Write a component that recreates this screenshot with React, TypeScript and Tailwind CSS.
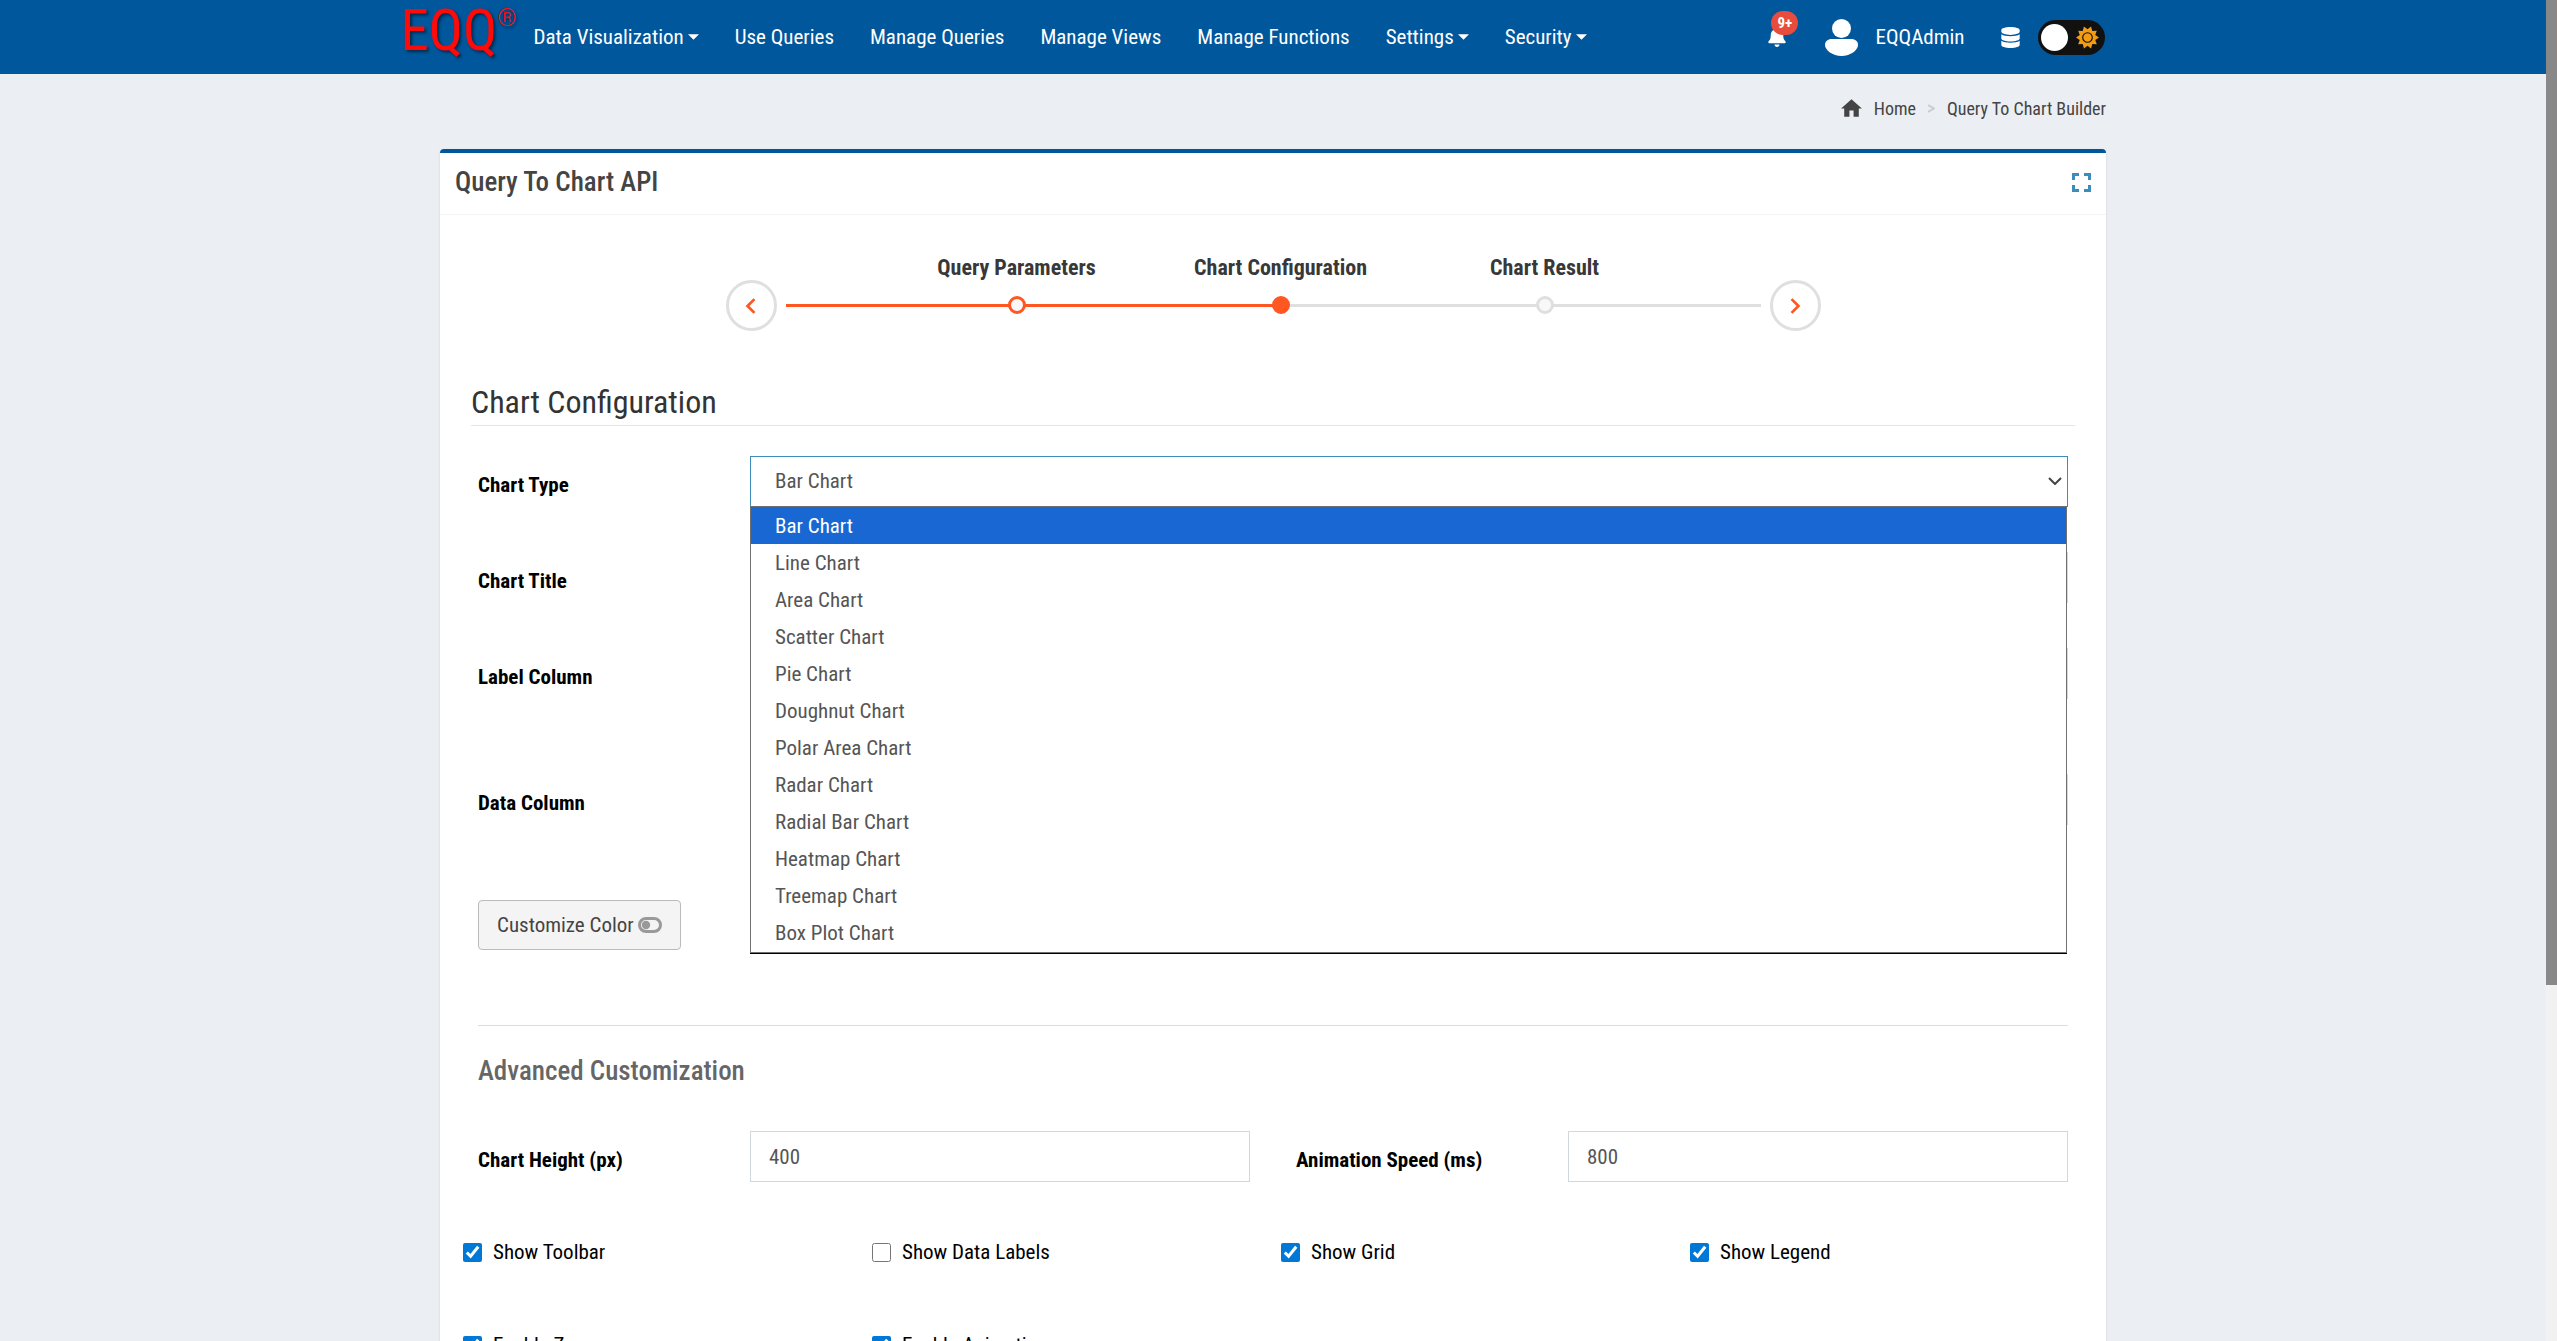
import { useState } from "react";
import type { ReactNode } from "react";
import { FaBell, FaDatabase } from "react-icons/fa";
import { MdHome } from "react-icons/md";

const chartTypes = [
  "Bar Chart",
  "Line Chart",
  "Area Chart",
  "Scatter Chart",
  "Pie Chart",
  "Doughnut Chart",
  "Polar Area Chart",
  "Radar Chart",
  "Radial Bar Chart",
  "Heatmap Chart",
  "Treemap Chart",
  "Box Plot Chart",
];

const navItems = [
  { label: "Data Visualization", menu: true },
  { label: "Use Queries" },
  { label: "Manage Queries" },
  { label: "Manage Views" },
  { label: "Manage Functions" },
  { label: "Settings", menu: true },
  { label: "Security", menu: true },
];

const toggles = [
  { id: "toolbar", label: "Show Toolbar", checked: true },
  { id: "data-labels", label: "Show Data Labels", checked: false },
  { id: "grid", label: "Show Grid", checked: true },
  { id: "legend", label: "Show Legend", checked: true },
  { id: "zoom", label: "Enable Zoom", checked: true },
  { id: "animation", label: "Enable Animation", checked: true },
];

const steps = [
  { label: "Query Parameters", state: "done" },
  { label: "Chart Configuration", state: "current" },
  { label: "Chart Result", state: "todo" },
];

function dotClass(state: string): string {
  switch (state) {
    case "done":
      return "border-[#ff5722] bg-[#f8f8f8]";
    case "current":
      return "border-[#ff5722] bg-[#ff5722]";
    default:
      return "border-[#dfdfdf] bg-[#f8f8f8]";
  }
}

function Caret() {
  return (
    <svg viewBox="0 0 10 5" className="h-[6px] w-[11px] fill-current" aria-hidden="true">
      <path d="M0 0h10L5 5z" />
    </svg>
  );
}

// ten rays, alternating outer and inner radius
const sunRays = Array.from({ length: 20 }, (_, i) => {
  const angle = (i * Math.PI) / 10;
  const r = i % 2 === 0 ? 12 : 8.5;
  return `${12 + r * Math.cos(angle)},${12 + r * Math.sin(angle)}`;
}).join(" ");

function SunIcon() {
  return (
    <svg viewBox="0 0 24 24" className="size-[23px]" aria-hidden="true">
      <polygon points={sunRays} fill="#f39c12" />
      <circle cx="12" cy="12" r="5" fill="#f39c12" stroke="#111" strokeWidth="1.2" />
    </svg>
  );
}

function UserIcon() {
  return (
    <svg viewBox="0 0 33 37" className="h-[37px] w-[33px] fill-current" aria-hidden="true">
      <circle cx="16.5" cy="9.5" r="9.5" />
      <path d="M7 20h19c4.500 0 7 2.500 7 6 0 5-7.500 11-16.500 11S0 31 0 26c0-3.500 2.500-6 7-6z" />
    </svg>
  );
}

function ToggleOffIcon() {
  return (
    <svg viewBox="0 0 24 16" className="h-[16px] w-[24px]" aria-hidden="true">
      <rect x="1.5" y="1.5" width="21" height="13" rx="6.5" fill="none" stroke="#999" strokeWidth="3" />
      <circle cx="8" cy="8" r="4.2" fill="#999" />
    </svg>
  );
}

function Header() {
  return (
    <header className="bg-[#00579c] text-white">
      <div className="mx-auto flex h-[74px] max-w-[1745px] items-center pr-[41px]">
        <a href="#" className="flex h-full w-[133px] items-start text-[#ff0a0a] [text-shadow:2px_2px_3px_#00000080]">
          <span className="text-[57px] leading-[62px]">EQQ</span>
          <span className="pt-1 text-[24px] leading-[28px] font-light">®</span>
        </a>
        <nav className="flex items-center gap-9 text-[21px] leading-[32px]">
          {navItems.map((item) => (
            <a key={item.label} href="#" className="flex items-center gap-1 whitespace-nowrap">
              {item.label}
              {item.menu && <Caret />}
            </a>
          ))}
        </nav>
        <div className="ml-auto flex items-center">
          <button type="button" aria-label="Notifications" className="relative mr-[38px]">
            <FaBell className="size-[20px]" />
            <span className="absolute -top-[16px] left-[4px] rounded-full bg-[#e74c3c] px-[6px] text-[15px] leading-[24px] font-bold">
              9+
            </span>
          </button>
          <a href="#" className="mr-[35px] flex items-center gap-[17px] text-[21px] leading-[32px]">
            <UserIcon />
            EQQAdmin
          </a>
          <button type="button" aria-label="Data source" className="mr-[17px]">
            <FaDatabase className="size-[21px]" />
          </button>
          <button
            type="button"
            role="switch"
            aria-checked="false"
            aria-label="Dark mode"
            className="flex h-[35px] w-[67px] items-center justify-between rounded-full bg-[#111] pr-[6px] pl-[3px]"
          >
            <span className="size-[27px] rounded-full bg-white" />
            <SunIcon />
          </button>
        </div>
      </div>
    </header>
  );
}

function Stepper() {
  return (
    <div className="mx-auto flex w-[1095px] items-end pt-[39px]">
      <StepButton label="Previous step" path="M10.500 3l-5 5 5 5" />
      <div className="relative mx-[9px] h-[77px] grow">
        <div className="absolute bottom-[24px] left-0 flex h-[3px] w-full bg-[#dfdfdf]">
          <div className="w-[51%] bg-[#ff5722]" />
        </div>
        <ol className="relative ml-[99px] grid w-[792px] grid-cols-3">
          {steps.map((step) => (
            <li key={step.label} className="flex flex-col items-center gap-[14px]">
              <span className="text-[22px] leading-[28px] font-bold text-[#383838]">{step.label}</span>
              <span className={`size-[18px] rounded-full border-3 ${dotClass(step.state)}`} />
            </li>
          ))}
        </ol>
      </div>
      <StepButton label="Next step" path="M5.500 3l5 5-5 5" />
    </div>
  );
}

function StepButton({ label, path }: { label: string; path: string }) {
  return (
    <button
      type="button"
      aria-label={label}
      className="flex size-[51px] shrink-0 items-center justify-center rounded-full border-3 border-[#dfdfdf]"
    >
      <svg viewBox="0 0 16 16" className="size-[22px] fill-none stroke-[#ff5722] stroke-2" aria-hidden="true">
        <path d={path} />
      </svg>
    </button>
  );
}

function Field({ id, label, children }: { id: string; label: string; children: ReactNode }) {
  return (
    <div className="grid grid-cols-[272px_1fr]">
      <label htmlFor={id} className="pt-[15px] text-[21px] leading-[28px] font-bold text-black">
        {label}
      </label>
      {children}
    </div>
  );
}

const inputClass = "h-[51px] w-full border border-[#d2d6de] bg-white px-[18px] text-[21px] text-[#555]";

function ChartTypeField() {
  const [value, setValue] = useState(chartTypes[0]);

  return (
    <Field id="chart-type" label="Chart Type">
      <div className="relative">
        <select
          id="chart-type"
          value={value}
          onChange={(e) => setValue(e.target.value)}
          className="h-[51px] w-full appearance-none border border-[#3c8dbc] bg-white px-6 pt-px text-[21px] text-[#555] outline-none"
        >
          {chartTypes.map((type) => (
            <option key={type}>{type}</option>
          ))}
        </select>
        <svg
          viewBox="0 0 14 8"
          className="pointer-events-none absolute top-[21px] right-[6px] h-[8px] w-[14px] fill-none stroke-[#444] stroke-2"
          aria-hidden="true"
        >
          <path d="M1 1l6 6 6-6" />
        </svg>
        <ul
          role="listbox"
          aria-label="Chart Type"
          className="absolute top-[50px] right-px left-0 z-10 border border-[#707070] bg-white pb-px text-[21px] leading-[35px] text-[#555] shadow-[0_1px_0_#000]"
        >
          {chartTypes.map((type) => (
            <li
              key={type}
              role="option"
              aria-selected={type === value}
              onClick={() => setValue(type)}
              className={`px-6 pt-[2px] ${type === value ? "bg-[#1967d2] text-white" : ""}`}
            >
              {type}
            </li>
          ))}
        </ul>
      </div>
    </Field>
  );
}

export default function App() {
  return (
    <div className="flex h-screen overflow-hidden bg-[#ebeff4] font-['Roboto_Condensed',Roboto,sans-serif] text-[#444]">
      <div className="grow overflow-hidden">
        <Header />

        <main className="mx-auto max-w-[1666px]">
          <nav aria-label="Breadcrumb" className="flex h-[75px] items-center justify-end pb-[6px] text-[18px]">
            <MdHome className="mr-[10px] size-[25px]" />
            <a href="#">Home</a>
            <svg viewBox="0 0 7 9" className="mx-[12px] h-[9px] w-[7px] fill-none stroke-[#ccc] stroke-2" aria-hidden="true">
              <path d="M0 1l6 3.500L0 8" />
            </svg>
            <span>Query To Chart Builder</span>
          </nav>

          <section className="rounded-t-[4px] border-t-4 border-[#00579c] bg-white pb-10 shadow-sm">
            <div className="flex h-[62px] items-center justify-between border-b border-[#f4f4f4] px-[15px] pb-[3px]">
              <h1 className="text-[27px] leading-[36px] font-medium">Query To Chart API</h1>
              <button type="button" aria-label="Full screen">
                <svg viewBox="0 0 19 19" className="size-[19px] fill-none stroke-[#3c8dbc] stroke-3" aria-hidden="true">
                  <path d="M1.500 7V1.500H7M12 1.500h5.500V7M17.500 12v5.500H12M7 17.500H1.500V12" />
                </svg>
              </button>
            </div>

            <Stepper />

            <h2 className="mx-[31px] mt-[48px] border-b border-[#e5e5e5] text-[32px] leading-[46px] text-[#333]">
              Chart Configuration
            </h2>

            <form className="mx-[38px] mt-[30px]">
              <div className="flex flex-col gap-[45px]">
                <ChartTypeField />
                <Field id="chart-title" label="Chart Title">
                  <input id="chart-title" type="text" className={inputClass} />
                </Field>
                <Field id="label-column" label="Label Column">
                  <select id="label-column" className={inputClass} />
                </Field>
              </div>
              <div className="mt-[75px]">
                <Field id="data-column" label="Data Column">
                  <select id="data-column" className={inputClass} />
                </Field>
              </div>

              <button
                type="button"
                className="mt-[75px] flex h-[50px] items-center gap-[4px] rounded-[4px] border border-[#bbb] bg-[#f4f4f4] px-[18px] text-[21px] leading-[32px]"
              >
                Customize Color
                <ToggleOffIcon />
              </button>

              <h3 className="mt-[75px] border-t border-[#ddd] pt-[27px] text-[27px] leading-[36px] font-medium text-[#666]">
                Advanced Customization
              </h3>
              <div className="mt-[42px] grid grid-cols-2 gap-[46px]">
                <Field id="chart-height" label="Chart Height (px)">
                  <input id="chart-height" type="text" defaultValue="400" className={inputClass} />
                </Field>
                <Field id="animation-speed" label="Animation Speed (ms)">
                  <input id="animation-speed" type="text" defaultValue="800" className={inputClass} />
                </Field>
              </div>

              <div className="-mr-[31px] -ml-[15px] mt-[54px] grid grid-cols-4 gap-y-[61px] text-[21px] leading-[32px] text-black">
                {toggles.map((t) => (
                  <label key={t.id} htmlFor={t.id} className="flex items-center gap-[11px]">
                    <input id={t.id} type="checkbox" defaultChecked={t.checked} className="size-[19px] accent-[#0078d7]" />
                    {t.label}
                  </label>
                ))}
              </div>
            </form>
          </section>
        </main>
      </div>

      {/* scroll track */}
      <div className="w-[11px] shrink-0 bg-[#f1f1f1]">
        <div className="h-[985px] bg-[#888]" />
      </div>
    </div>
  );
}
